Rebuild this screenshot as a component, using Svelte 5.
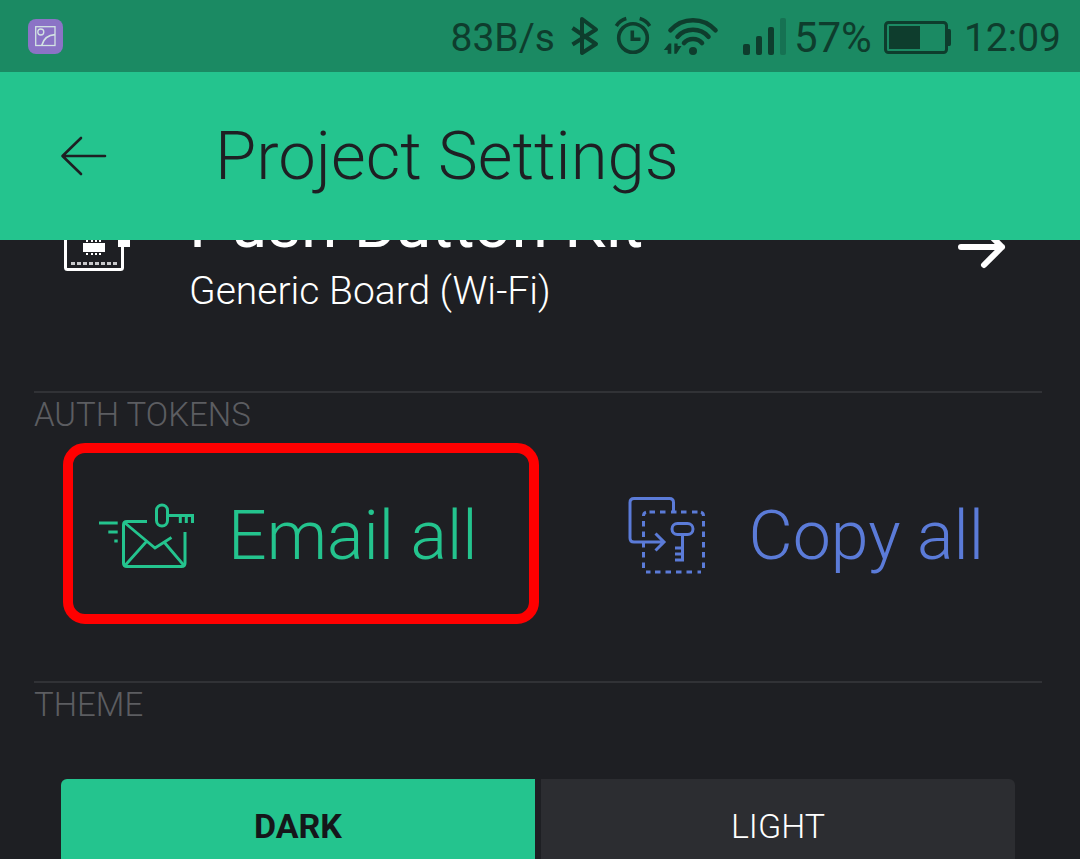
<script>
  let theme = $state('dark');
  const themes = [
    { id: 'dark', label: 'DARK' },
    { id: 'light', label: 'LIGHT' },
  ];
  const pins = [22, 27, 31, 35];
  const holes = [0, 1, 2, 3, 4, 5, 6, 7];
</script>

<div class="screen">
  <div class="status">
    <svg class="shot" width="35" height="35" viewBox="0 0 35 35" aria-hidden="true">
      <rect width="35" height="35" rx="8" fill="#8b73c6" />
      <g fill="none" stroke="#d3e4e3" stroke-width="1.3">
        <rect x="7.7" y="7.7" width="19.3" height="18.8" />
        <circle cx="12.8" cy="13" r="3" />
        <path d="M13.8 26.2C15.5 20 20 16 27 15.6" stroke-width="1.6" />
      </g>
    </svg>
    <span>83B/s</span>
    <svg width="43" height="40" viewBox="561 16 43 40" aria-hidden="true">
      <path d="M570.5 28L594 44L580 53V19L594 29.5L570.5 44.5" fill="none" stroke="#0e3d2d" stroke-width="4" stroke-linejoin="round" />
    </svg>
    <svg width="38" height="40" viewBox="612 16 38 40" aria-hidden="true">
      <g fill="none" stroke="#0e3d2d" stroke-width="3.6">
        <circle cx="631" cy="38" r="14.3" />
        <path d="M630.3 30.5V39.3H638.5" />
        <path d="M614.3 26C616.5 22.5 620 19.7 624.3 18.6M637.7 18.6C642 19.7 645.5 22.5 647.7 26" />
      </g>
    </svg>
    <svg width="74" height="40" viewBox="658 16 74 40" aria-hidden="true">
      <g fill="none" stroke="#0e3d2d" stroke-width="4.6" stroke-linecap="round">
        <path d="M668.5 30.3C680.5 16.8 701.5 16.8 713.5 30.3" />
        <path d="M675.5 36.7C683.5 27.4 698.5 27.4 706.5 36.7" />
        <path d="M682 43C686.5 37.6 695.5 37.6 700 43" />
      </g>
      <circle cx="691" cy="51" r="4" fill="#0e3d2d" />
      <path d="M669.3 43.5V53.7H665.7V50H661.8L667 43.5ZM672.3 43.5H675.6V46H679.5L674.5 53.7H672.3Z" fill="#0e3d2d" />
    </svg>
    <svg width="44" height="40" viewBox="740 16 44 40" aria-hidden="true">
      <g fill="#0e3d2d">
        <rect x="741" y="44" width="7" height="11" rx="2" />
        <rect x="754" y="36" width="6" height="19" rx="2" />
        <rect x="766" y="27" width="6" height="28" rx="2" />
        <rect x="778" y="18" width="6" height="37" rx="2" opacity=".3" />
      </g>
    </svg>
    <span class="level">57%</span>
    <svg width="76" height="40" viewBox="880 16 76 40" aria-hidden="true">
      <rect x="885.5" y="22.5" width="61" height="30" rx="3" fill="none" stroke="#0e3d2d" stroke-width="3" />
      <path d="M889 26H920V49H889ZM948 29H949.5Q951 29 951 31V44Q951 46 949.5 46H948Z" fill="#0e3d2d" />
    </svg>
    <time>12:09</time>
  </div>

  <header>
    <button class="back" aria-label="Back">
      <svg width="48" height="42" viewBox="0 0 48 42">
        <path d="M21 3L2.5 21L21 39M3 21H45" fill="none" stroke="#1e1f23" stroke-width="2.6" stroke-linecap="round" stroke-linejoin="round" />
      </svg>
    </button>
    <h1>Project Settings</h1>
  </header>

  <main>
    <a class="device" href="#device">
      <svg width="68" height="60" viewBox="0 0 68 60" aria-hidden="true">
        <rect x="1.5" y="1.5" width="57" height="57" rx="2" fill="none" stroke="#fff" stroke-width="3" />
        <g fill="#fff">
          <rect x="54" y="22" width="12" height="14" />
          <rect x="19" y="32" width="22" height="9" />
          {#each pins as x}
            <rect {x} y="29" width="2" height="2" />
            <rect {x} y="42" width="2" height="2" />
          {/each}
        </g>
        {#each holes as i}
          <rect x={7 + i * 6} y="51" width="4" height="3" fill="#c8c8ca" />
        {/each}
      </svg>
      <span class="names">
        <strong>Push Button Kit</strong>
        <span>Generic Board (Wi-Fi)</span>
      </span>
      <svg class="go" width="50" height="48" viewBox="0 0 50 48" aria-hidden="true">
        <path d="M4 24H45M27 6L45 24L27 42" fill="none" stroke="#fff" stroke-width="6" stroke-linecap="round" stroke-linejoin="round" />
      </svg>
    </a>

    <section>
      <h2>AUTH TOKENS</h2>
      <div class="actions">
        <button class="email">
          <svg width="96" height="66" viewBox="99 502 96 66" aria-hidden="true">
            <g fill="none" stroke="currentColor" stroke-width="3">
              <path d="M99 522H117.7M108.3 531H117.7M114.3 540H117.7" />
              <path d="M147 520.5H127Q123.500 520.5 123.5 524V562Q123.5 565.5 127 565.5H181.5Q185 565.5 185 562V531" />
              <path d="M125 522L155 547L171.5 536.5M146 541L125 564.5M164 541L184 564.5" stroke-width="2.8" />
              <rect x="156.5" y="504" width="11" height="21" rx="5.5" />
              <path d="M168 514.5H194M180.3 514V522M186.3 514V522M192.5 514V522" />
            </g>
          </svg>
          <span>Email all</span>
        </button>
        <button class="copy">
          <svg width="78" height="78" viewBox="628 498 78 78" aria-hidden="true">
            <g fill="none" stroke="currentColor" stroke-width="3">
              <path d="M673.5 513V503.5Q673.5 499.5 669.5 499.5H634Q630 499.5 630 503.5V539Q630 543 634 543H664M655.5 534.5L664 543L655.5 551.5" />
              <path d="M649.5 513H655M660 513H665.5M671 513H676.5M681 513H686.5M692 513H697.5M655 573H660.5M665.5 573H671M676 573H681.5M686.5 573H692M643.5 522V527.5M643.5 532.5V538M643.5 543V548.5M643.5 553V558.5M643.5 563.5V569M703.5 522V527.5M703.5 532.5V538M703.5 543V548.5M703.5 553V558.5M703.5 563.5V569M643.5 517Q643.5 514 646 513.3M701 513.3Q703.500 514 703.5 517M646 573H650.5M697.5 573H701" />
              <rect x="672" y="524.5" width="21" height="11" rx="5.5" />
              <path d="M682.5 536V562.5M682.5 549H675M682.5 555H675M682.5 561H675" />
            </g>
          </svg>
          <span>Copy all</span>
        </button>
      </div>
    </section>

    <section>
      <h2>THEME</h2>
      <div class="themes">
        {#each themes as t}
          <button class:active={theme === t.id} aria-pressed={theme === t.id} onclick={() => (theme = t.id)}>{t.label}</button>
        {/each}
      </div>
    </section>
  </main>
</div>

<style>
  :global(body) {
    margin: 0;
    background: #1e1f23;
  }
  .screen {
    display: flex;
    flex-direction: column;
    height: 100vh;
    background: #1e1f23;
    color: #fff;
    font-family: Roboto, sans-serif;
    font-weight: 300;
  }
  svg {
    display: block;
    flex: none;
  }
  button {
    margin: 0;
    padding: 0;
    border: 0;
    background: none;
    color: inherit;
    font: inherit;
    cursor: pointer;
  }
  .status {
    flex: none;
    display: flex;
    align-items: center;
    gap: 8px;
    height: 72px;
    padding: 0 19px 0 28px;
    background: #1b8a63;
    color: #0e3d2d;
    font-size: 39px;
    font-weight: 400;
    line-height: 48px;
  }
  .status span,
  .status time {
    padding-top: 4px;
  }
  .status .level {
    font-size: 42px;
  }
  .status .shot {
    margin-right: auto;
  }
  header {
    flex: none;
    display: flex;
    align-items: center;
    gap: 107px;
    height: 168px;
    padding-left: 60px;
    background: #24c48e;
    color: #1e1f23;
  }
  h1 {
    margin: 0;
    font-size: 67px;
    font-weight: 300;
    line-height: 72px;
  }
  main {
    flex: 1;
    min-height: 0;
    overflow: hidden;
    padding: 0 38px 0 34px;
  }
  .device {
    display: flex;
    align-items: flex-start;
    height: 180px;
    margin-top: -72px;
    padding: 43px 35px 0 30px;
    color: #fff;
    text-decoration: none;
  }
  .names {
    flex: 1;
    display: flex;
    flex-direction: column;
    gap: 12px;
    margin: -16px 0 0 57px;
    font-size: 39px;
    line-height: 48px;
  }
  strong {
    font-size: 66px;
    font-weight: 400;
    line-height: 60px;
  }
  .go {
    margin-top: 12px;
  }
  section {
    height: 288px;
    border-top: 2px solid #313236;
  }
  h2 {
    margin: 0;
    color: #5c5d61;
    font-size: 33px;
    font-weight: 300;
    line-height: 44px;
  }
  .actions {
    display: grid;
    grid-template-columns: 1fr 1fr;
    gap: 28px;
    margin: 6px 0 0 29px;
  }
  .actions button {
    display: flex;
    align-items: center;
    box-sizing: border-box;
    height: 181px;
    padding-top: 4px;
    font-size: 68px;
    line-height: 80px;
    white-space: nowrap;
  }
  .actions .email {
    gap: 33px;
    padding-left: 26px;
    border: 10px solid #f00;
    border-radius: 22px;
    color: #24c48e;
  }
  .actions .copy {
    gap: 43px;
    padding-left: 61px;
    color: #5b7bd8;
  }
  .themes {
    display: grid;
    grid-template-columns: 1fr 1fr;
    gap: 6px;
    margin: 52px 27px 0;
    border-radius: 6px;
    overflow: hidden;
  }
  .themes button {
    height: 94px;
    background: #2c2d31;
    font-size: 34px;
  }
  .themes .active {
    background: #24c48e;
    color: #15161a;
    font-weight: 700;
  }
</style>
